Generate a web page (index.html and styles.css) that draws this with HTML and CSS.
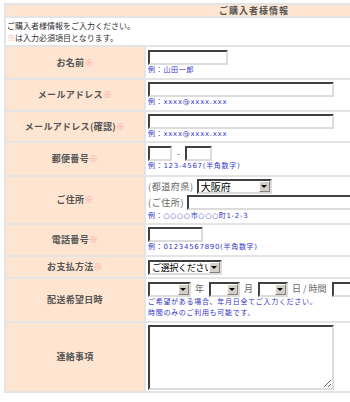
FILE: index.html
```html
<!DOCTYPE html>
<html>
<head>
  <meta charset="utf-8">
  <title>ご購入者様情報</title>
  <link rel="stylesheet" href="styles.css">
</head>
<body>

<form class="order-form">
<table class="order">
  <colgroup><col class="c-label"><col></colgroup>
  <tr class="head"><th colspan="2">ご購入者様情報</th></tr>
  <tr class="intro">
    <td colspan="2">ご購入者様情報をご入力ください。<br><span class="req">※</span>は入力必須項目となります。</td>
  </tr>
  <tr class="r33">
    <th>お名前<span class="req">※</span></th>
    <td><input type="text" name="name" class="w80"><p class="hint">例：山田一郎</p></td>
  </tr>
  <tr class="r32">
    <th>メールアドレス<span class="req">※</span></th>
    <td><input type="text" name="mail" class="w186"><p class="hint">例：xxxx@xxxx.xxx</p></td>
  </tr>
  <tr class="r31">
    <th>メールアドレス(確認)<span class="req">※</span></th>
    <td><input type="text" name="mail2" class="w186"><p class="hint">例：xxxx@xxxx.xxx</p></td>
  </tr>
  <tr class="r34">
    <th>郵便番号<span class="req">※</span></th>
    <td>
      <input type="text" name="zip1" class="w24"><span class="dash">-</span><input type="text" name="zip2" class="w27">
      <p class="hint">例：123-4567(半角数字)</p>
    </td>
  </tr>
  <tr class="r48">
    <th>ご住所<span class="req">※</span></th>
    <td>
      <div class="line"><span class="cap">(都道府県)</span><span class="sel w75"><select name="pref" class="big"><option>大阪府</option></select></span></div>
      <div class="line"><span class="cap">(ご住所)</span><input type="text" name="addr" class="w220"></div>
      <p class="hint">例：○○○○市○○○町1-2-3</p>
    </td>
  </tr>
  <tr class="r32">
    <th>電話番号<span class="req">※</span></th>
    <td><input type="text" name="tel" class="w55"><p class="hint">例：01234567890(半角数字)</p></td>
  </tr>
  <tr class="r22">
    <th>お支払方法<span class="req">※</span></th>
    <td><span class="sel w74"><select name="pay"><option>ご選択ください</option></select></span></td>
  </tr>
  <tr class="r44">
    <th>配送希望日時</th>
    <td>
      <div class="line">
        <span class="sel w43"><select name="y"><option></option></select></span><span class="unit">年</span>
        <span class="sel w31"><select name="m"><option></option></select></span><span class="unit">月</span>
        <span class="sel w30"><select name="d"><option></option></select></span><span class="unit">日 / 時間</span>
        <span class="sel w60"><select name="t"><option></option></select></span>
      </div>
      <p class="hint">ご希望がある場合、年月日全てご入力ください。<br>時間のみのご利用も可能です。</p>
    </td>
  </tr>
  <tr class="r70">
    <th>連絡事項</th>
    <td><textarea name="note"></textarea></td>
  </tr>
</table>
</form>

</body>
</html>
```

FILE: styles.css
```css
body {
  margin: 0;
  padding: 3px 0 0 4px;
  background: #fff;
  font-family: "Noto Sans CJK JP", sans-serif;
  color: #333;
}

.order-form {
  margin: 0;
}

.order {
  border-collapse: collapse;
  width: 500px;
  table-layout: fixed;
}

.c-label {
  width: 140px;
}

.order th,
.order td {
  border: 2px solid #e4e4e4;
  padding: 0 2px;
}

.order th {
  background: #fde5d1;
  color: #555;
  font-size: 9px;
  line-height: 12px;
  letter-spacing: 0.3px;
  font-weight: bold;
}

.order td {
  vertical-align: middle;
  font-size: 9px;
  line-height: 12px;
}

.head th {
  height: 11px;
  line-height: 10px;
  letter-spacing: 1px;
  text-align: center;
}

.intro td {
  height: 27px;
  padding: 0 1px;
  font-size: 8px;
  line-height: 12px;
}

.req {
  color: #ff9c9c;
  font-weight: normal;
}

.r22 { height: 22px; }
.r31 { height: 31px; }
.r32 { height: 32px; }
.r33 { height: 33px; }
.r34 { height: 34px; }
.r44 { height: 44px; }
.r48 { height: 48px; }
.r70 { height: 70px; }

.hint {
  margin: 0;
  color: #3535c8;
  font-family: "DejaVu Sans", "Noto Sans CJK JP", sans-serif;
  font-size: 7px;
  line-height: 11px;
  letter-spacing: 0.7px;
}

.line {
  display: flex;
  align-items: center;
  height: 16px;
}

.cap,
.unit {
  color: #666;
  font-size: 9px;
  white-space: nowrap;
}

.cap {
  margin-right: 3px;
  letter-spacing: 0.6px;
}

.unit {
  margin: 0 5px 0 4px;
}

.dash {
  display: inline-block;
  width: 13px;
  text-align: center;
  color: #666;
  font-size: 9px;
  vertical-align: middle;
}

input[type=text],
textarea,
select {
  box-sizing: border-box;
  margin: 0;
  border: 2px solid;
  border-color: #404040 #dcdcdc #dcdcdc #404040;
  border-radius: 0;
  background: #fff;
  font-family: "Noto Sans CJK JP", sans-serif;
  outline: none;
}

input[type=text] {
  height: 15px;
  padding: 0 2px;
  font-size: 10px;
  vertical-align: middle;
}

.w24 { width: 24px; }
.w27 { width: 27px; }
.w55 { width: 55px; }
.w80 { width: 80px; }
.w186 { width: 186px; }
.w220 { width: 220px; flex: none; }

textarea {
  display: block;
  width: 186px;
  height: 65px;
  padding: 2px;
  font-size: 10px;
}

.sel {
  position: relative;
  display: inline-block;
  flex: none;
  vertical-align: middle;
}

.sel select {
  -webkit-appearance: none;
  appearance: none;
  width: 100%;
  height: 15px;
  padding: 0 12px 0 2px;
  color: #000;
  font-size: 9px;
  letter-spacing: -0.3px;
  line-height: 11px;
  display: block;
}

.sel select.big {
  font-size: 10px;
  letter-spacing: 0;
}

/* combo arrow button */
.sel::after {
  content: "";
  position: absolute;
  top: 2px;
  right: 2px;
  width: 9px;
  height: 9px;
  background: #d4d0c8;
  border: 1px solid;
  border-color: #fff #808080 #808080 #fff;
  pointer-events: none;
}

.sel::before {
  content: "";
  position: absolute;
  top: 6px;
  right: 5px;
  z-index: 1;
  border-style: solid;
  border-width: 3px 3px 0 3px;
  border-color: #000 transparent transparent transparent;
  pointer-events: none;
}

.w30 { width: 30px; }
.w31 { width: 31px; }
.w43 { width: 43px; }
.w60 { width: 60px; }
.w74 { width: 74px; }
.w75 { width: 75px; }
```
